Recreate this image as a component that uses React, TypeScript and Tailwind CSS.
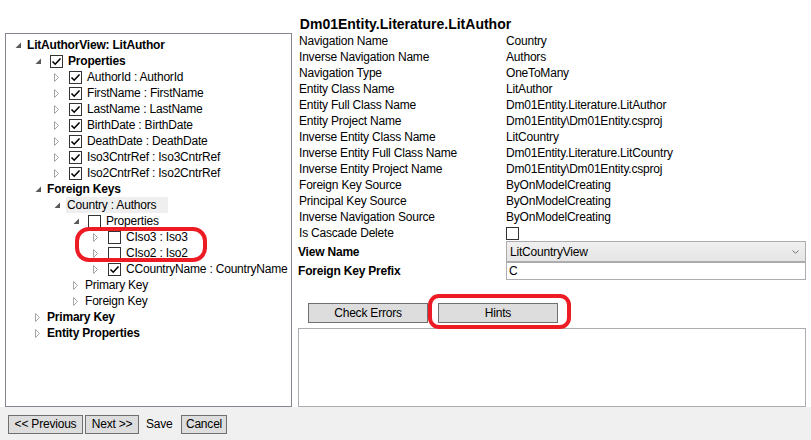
import React from "react";

type Row = {
  level: number;
  exp: "open" | "closed";
  check?: boolean;
  text: string;
  bold?: boolean;
  selected?: boolean;
};

const treeRows: Row[] = [
  { level: 0, exp: "open", text: "LitAuthorView: LitAuthor", bold: true },
  { level: 1, exp: "open", check: true, text: "Properties", bold: true },
  { level: 2, exp: "closed", check: true, text: "AuthorId : AuthorId" },
  { level: 2, exp: "closed", check: true, text: "FirstName : FirstName" },
  { level: 2, exp: "closed", check: true, text: "LastName : LastName" },
  { level: 2, exp: "closed", check: true, text: "BirthDate : BirthDate" },
  { level: 2, exp: "closed", check: true, text: "DeathDate : DeathDate" },
  { level: 2, exp: "closed", check: true, text: "Iso3CntrRef : Iso3CntrRef" },
  { level: 2, exp: "closed", check: true, text: "Iso2CntrRef : Iso2CntrRef" },
  { level: 1, exp: "open", text: "Foreign Keys", bold: true },
  { level: 2, exp: "open", text: "Country : Authors", selected: true },
  { level: 3, exp: "open", check: false, text: "Properties" },
  { level: 4, exp: "closed", check: false, text: "CIso3 : Iso3" },
  { level: 4, exp: "closed", check: false, text: "CIso2 : Iso2" },
  { level: 4, exp: "closed", check: true, text: "CCountryName : CountryName" },
  { level: 3, exp: "closed", text: "Primary Key" },
  { level: 3, exp: "closed", text: "Foreign Key" },
  { level: 1, exp: "closed", text: "Primary Key", bold: true },
  { level: 1, exp: "closed", text: "Entity Properties", bold: true },
];

const indent: Record<number, string> = {
  0: "ml-[9px]",
  1: "ml-[29px]",
  2: "ml-[48px]",
  3: "ml-[67px]",
  4: "ml-[87px]",
};

const props = [
  ["Navigation Name", "Country"],
  ["Inverse Navigation Name", "Authors"],
  ["Navigation Type", "OneToMany"],
  ["Entity Class Name", "LitAuthor"],
  ["Entity Full Class Name", "Dm01Entity.Literature.LitAuthor"],
  ["Entity Project Name", "Dm01Entity\\Dm01Entity.csproj"],
  ["Inverse Entity Class Name", "LitCountry"],
  ["Inverse Entity Full Class Name", "Dm01Entity.Literature.LitCountry"],
  ["Inverse Entity Project Name", "Dm01Entity\\Dm01Entity.csproj"],
  ["Foreign Key Source", "ByOnModelCreating"],
  ["Principal Key Source", "ByOnModelCreating"],
  ["Inverse Navigation Source", "ByOnModelCreating"],
];

function Expander({ open }: { open: boolean }) {
  if (open) {
    return (
      <svg width="7" height="7" viewBox="0 0 7 7">
        <path d="M6 0.5 L6 6 L0.5 6 Z" fill="#595959" />
      </svg>
    );
  }
  return (
    <svg width="6" height="9" viewBox="0 0 6 9">
      <path d="M0.5 0.5 L0.5 8.5 L4.5 4.5 Z" fill="#fff" stroke="#a6a6a6" />
    </svg>
  );
}

function Check({ checked }: { checked: boolean }) {
  return (
    <span className="w-[13px] h-[13px] border border-[#333333] bg-white flex items-center justify-center shrink-0">
      {checked && (
        <svg width="11" height="11" viewBox="0 0 11 11">
          <path d="M1.5 5.5 L4.2 8.2 L9.5 2.5" fill="none" stroke="#000" strokeWidth="1.6" />
        </svg>
      )}
    </span>
  );
}

export default function App() {
  return (
    <div className="relative w-[811px] h-[440px] bg-white text-black text-[12px] tracking-[-0.2px] font-['Liberation_Sans',Arial,sans-serif] flex flex-col overflow-hidden">
      <div className="h-[33px] pt-[16px] text-center text-[14px] font-bold leading-[17px] tracking-normal">
        Dm01Entity.Literature.LitAuthor
      </div>

      <div className="flex h-[374px]">
        {/* tree */}
        <div className="ml-[5px] w-[287px] border border-[#828790] pt-[3px] overflow-hidden">
          {treeRows.map((r, i) => (
            <div key={i} className={`flex items-center h-[16px] whitespace-nowrap ${indent[r.level]}`}>
              <span className={r.check === undefined ? "w-[12px] flex items-center" : "w-[15px] flex items-center"}>
                <Expander open={r.exp === "open"} />
              </span>
              {r.check !== undefined && (
                <span className="mr-[5px]">
                  <Check checked={r.check} />
                </span>
              )}
              <span
                className={`leading-[16px] ${r.bold ? "font-bold" : ""} ${
                  r.selected ? "bg-[#efefef] pl-[1px] pr-[12px]" : ""
                }`}
              >
                {r.text}
              </span>
            </div>
          ))}
        </div>

        {/* details */}
        <div className="ml-[6px] w-[508px] flex flex-col">
          {props.map(([k, v]) => (
            <div key={k} className="flex h-[16px] leading-[16px]">
              <span className="w-[208px] pl-[1px]">{k}</span>
              <span>{v}</span>
            </div>
          ))}
          <div className="flex h-[16px] leading-[16px] items-center">
            <span className="w-[208px] pl-[1px]">Is Cascade Delete</span>
            <span className="w-[13px] h-[13px] border border-[#333333] bg-white"></span>
          </div>
          <div className="flex h-[21px] items-center">
            <span className="w-[208px] font-bold">View Name</span>
            <div className="flex-1 h-[21px] border border-[#acacac] bg-[linear-gradient(#f0f0f0,#e5e5e5)] flex items-center justify-between pl-[3px] pr-[6px]">
              <span>LitCountryView</span>
              <svg width="7" height="4" viewBox="0 0 7 4">
                <path d="M0.5 0.5 L3.5 3.3 L6.5 0.5" fill="none" stroke="#707070" />
              </svg>
            </div>
          </div>
          <div className="flex h-[18px] items-center">
            <span className="w-[208px] font-bold">Foreign Key Prefix</span>
            <div className="flex-1 h-[18px] border border-[#abadb3] bg-white pl-[2px] leading-[16px]">C</div>
          </div>

          <div className="flex mt-[23px] h-[20px]">
            <button className="ml-[10px] w-[120px] h-[20px] border border-[#707070] bg-[#dddddd] leading-[18px]">
              Check Errors
            </button>
            <button className="ml-[10px] w-[120px] h-[20px] border border-[#707070] bg-[#dddddd] leading-[18px]">
              Hints
            </button>
          </div>

          <div className="mt-[5px] flex-1 border border-[#abadb3] bg-white"></div>
        </div>
      </div>

      <div className="h-[33px] bg-[#f0f0f0] flex items-start pt-[8px] pl-[8px]">
        <button className="w-[75px] h-[19px] border border-[#707070] bg-[#dddddd] leading-[17px]">
          &lt;&lt; Previous
        </button>
        <button className="ml-[2px] w-[54px] h-[19px] border border-[#707070] bg-[#dddddd] leading-[17px]">
          Next &gt;&gt;
        </button>
        <span className="ml-[7px] w-[35px] leading-[19px]">Save</span>
        <button className="w-[46px] h-[19px] border border-[#707070] bg-[#dddddd] leading-[17px]">Cancel</button>
      </div>

      {/* red annotation marks drawn over the screenshot */}
      <div className="absolute left-[75px] top-[227px] w-[132px] h-[35px] border-[4px] border-[#ed1c24] rounded-[14px]"></div>
      <div className="absolute left-[428px] top-[294px] w-[143px] h-[35px] border-[4px] border-[#ed1c24] rounded-[11px]"></div>
    </div>
  );
}
